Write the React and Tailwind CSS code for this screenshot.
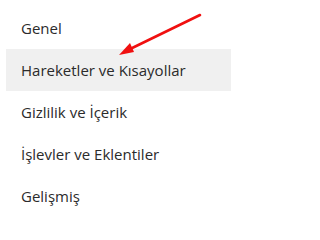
import React from "react";

const items = [
  "Genel",
  "Hareketler ve Kısayollar",
  "Gizlilik ve İçerik",
  "İşlevler ve Eklentiler",
  "Gelişmiş",
];

const App = () => {
  return (
    <div className="relative w-[236px] h-[220px] bg-white pt-[7px] pl-[6px] pr-[5px] font-['Open_Sans',sans-serif]">
      {items.map((item, index) => (
        <div
          key={index}
          className={`h-[42px] flex items-center pl-[15px] text-[15px] text-[#2b2b2b] ${
            index === 1 ? "bg-[#f0f0f0]" : ""
          }`}
        >
          {item}
        </div>
      ))}
      <svg
        className="absolute left-0 top-0"
        width="236"
        height="220"
        viewBox="0 0 236 220"
      >
        <line x1="200" y1="15" x2="126" y2="51" stroke="#f01010" strokeWidth="2.6" strokeLinecap="round" />
        <polygon points="119,55 130,43 134,52" fill="#f01010" />
      </svg>
    </div>
  );
};

export default App;
